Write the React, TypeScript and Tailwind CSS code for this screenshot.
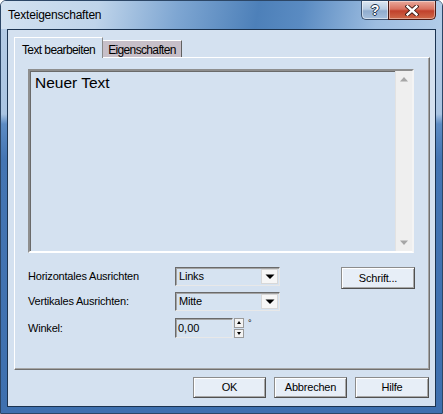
const sans = "font-['Liberation_Sans',Arial,sans-serif]";

function CaptionButtons() {
  return (
    <div className="flex h-[19px]">
      <div className="flex w-[27px] items-center justify-center rounded-bl-[5px] border border-t-0 border-r-0 border-[#3d5270] bg-[linear-gradient(180deg,#dde7f2_0%,#b9cce2_45%,#90acce_55%,#a7c0dd_100%)] shadow-[inset_0_0_0_1px_rgba(255,255,255,0.5)]">
        <span className={`${sans} text-[14px] font-bold leading-none text-white [text-shadow:1px_0_0_#22344d,-1px_0_0_#22344d,0_1px_0_#22344d,0_-1px_0_#22344d]`}>?</span>
      </div>
      <div className="flex w-[48px] items-center justify-center rounded-br-[5px] border border-t-0 border-[#4a1a14] bg-[linear-gradient(180deg,#e9a99c_0%,#d8715f_45%,#c1412c_55%,#cf6a4a_100%)] shadow-[inset_0_0_0_1px_rgba(255,255,255,0.4)]">
        <svg width="14" height="11" viewBox="0 0 14 11">
          <path d="M2.5 1.5 L11.5 9.5 M11.5 1.5 L2.5 9.5" stroke="#3a1812" strokeWidth="4.2" strokeLinecap="square" />
          <path d="M2.5 1.5 L11.5 9.5 M11.5 1.5 L2.5 9.5" stroke="#ffffff" strokeWidth="2.4" strokeLinecap="square" />
        </svg>
      </div>
    </div>
  );
}

function Combo({ value }: { value: string }) {
  return (
    <div className="flex h-[19px] w-[105px] items-center border border-[#6a6a6a] border-b-[#e8e8e8] border-r-[#e8e8e8] bg-[#d6e3f1] shadow-[inset_1px_1px_0_#a3a3a3]">
      <span className="flex-1 pl-[3px] text-[11px] leading-none tracking-[-0.2px]">{value}</span>
      <div className="mr-[1px] flex h-[15px] w-[17px] items-center justify-center border border-[#d8d8d8] bg-[#f6f6f6]">
        <svg width="10" height="6" viewBox="0 0 10 6">
          <path d="M0.5 0.5 H9.5 L5 5 Z" fill="#000" />
        </svg>
      </div>
    </div>
  );
}

function Btn({ label, w, h }: { label: string; w: string; h: string }) {
  return (
    <div
      className={`${w} ${h} flex items-center justify-center border border-[#8c8c8c] border-b-[#505050] border-r-[#505050] bg-[#e7eef7] text-[11px] leading-none tracking-[-0.2px] shadow-[inset_1px_1px_0_#ffffff,inset_-1px_-1px_0_#a8a8a8]`}
    >
      {label}
    </div>
  );
}

export default function App() {
  return (
    <div className={`${sans} flex h-[414px] w-[443px] flex-col overflow-hidden rounded-t-[6px] border border-[#2c4666] text-black`}>
      <div className="flex h-[28px] shrink-0 items-start justify-between bg-[linear-gradient(100deg,#d3e2f1_0%,#bfd4ea_22%,#7ea6d2_40%,#4d80b9_58%,#5a8bc2_68%,#9dbde0_85%,#b2cce8_100%)] pr-[6px]">
        <span className="pl-[7px] pt-[8px] text-[12px] leading-none tracking-[-0.2px]">Texteigenschaften</span>
        <CaptionButtons />
      </div>
      <div className="flex flex-1 flex-col bg-[linear-gradient(180deg,#b4cbe5_0px,#a9c4e2_85px,#5d8cc4_95px,#4475b3_130px,#3e70af_100%)] px-[6px] pb-[6px]">
        <div className="flex flex-1 flex-col border border-[#1b3350] bg-[#d4e1f0]">
          <div className="flex h-[27px] items-end pl-[6px]">
            <div className="relative z-10 mb-[-1px] flex h-[21px] w-[89px] items-start justify-center border border-b-0 border-white border-r-[#8a8a8a] bg-[#d4e1f0] pt-[6px] text-[12px] leading-none tracking-[-0.6px]">
              Text bearbeiten
            </div>
            <div className="flex h-[17px] w-[79px] items-start justify-center border border-b-0 border-white border-r-[#606060] border-l-0 bg-[#c7bfc8] pt-[3px] text-[12px] leading-none tracking-[-0.65px]">
              Eigenschaften
            </div>
          </div>
          <div className="ml-[6px] mr-[5px] flex h-[313px] flex-col border border-white border-b-[#707070] border-r-[#707070] px-[13px] pt-[11px] shadow-[inset_-1px_-1px_0_#a5a5a5]">
            <div className="flex h-[184px] w-[386px] border-2 border-[#8e8e8e] border-b-white border-r-[#f4f4f4] shadow-[inset_1px_1px_0_#6a6a6a]">
              <div className="flex-1 pl-[5px] pt-[3px] text-[15.5px] leading-[18px]">Neuer Text</div>
              <div className="flex w-[17px] flex-col items-center justify-between border-l border-[#e2e2e2] bg-[#efefef] py-[6px]">
                <svg width="8" height="5" viewBox="0 0 8 5">
                  <path d="M0 4.5 H8 L4 0 Z" fill="#a6a6a6" />
                </svg>
                <svg width="8" height="5" viewBox="0 0 8 5">
                  <path d="M0 0.5 H8 L4 5 Z" fill="#a6a6a6" />
                </svg>
              </div>
            </div>
            <div className="mt-[14px] flex flex-col text-[11px] leading-none">
              <div className="flex h-[19px] items-start">
                <span className="w-[147px] self-center tracking-[-0.2px]">Horizontales Ausrichten</span>
                <Combo value="Links" />
                <div className="ml-auto mr-[1px]">
                  <Btn label="Schrift..." w="w-[74px]" h="h-[22px]" />
                </div>
              </div>
              <div className="mt-[6px] flex h-[19px] items-center">
                <span className="w-[147px] tracking-[-0.2px]">Vertikales Ausrichten:</span>
                <Combo value="Mitte" />
              </div>
              <div className="mt-[7px] flex h-[20px] items-center">
                <span className="w-[147px] tracking-[-0.2px]">Winkel:</span>
                <div className="flex h-[20px] w-[58px] items-center border border-[#6a6a6a] border-b-[#e8e8e8] border-r-[#e8e8e8] bg-[#d6e3f1] pl-[2px] shadow-[inset_1px_1px_0_#a3a3a3]">
                  0,00
                </div>
                <div className="ml-[1px] flex h-[20px] w-[10px] flex-col gap-[1px]">
                  <div className="flex flex-1 items-center justify-center border border-[#9a9a9a] bg-[#f3f3f3]">
                    <svg width="4" height="3" viewBox="0 0 4 3">
                      <path d="M0 3 H4 L2 0 Z" fill="#000" />
                    </svg>
                  </div>
                  <div className="flex flex-1 items-center justify-center border border-[#9a9a9a] bg-[#f3f3f3]">
                    <svg width="4" height="3" viewBox="0 0 4 3">
                      <path d="M0 0 H4 L2 3 Z" fill="#000" />
                    </svg>
                  </div>
                </div>
                <span className="ml-[4px] self-start pt-[1px] text-[9px]">°</span>
              </div>
            </div>
          </div>
          <div className="mt-[7px] flex justify-end gap-[8px] pr-[6px]">
            <Btn label="OK" w="w-[73px]" h="h-[21px]" />
            <Btn label="Abbrechen" w="w-[73px]" h="h-[21px]" />
            <Btn label="Hilfe" w="w-[74px]" h="h-[21px]" />
          </div>
        </div>
      </div>
    </div>
  );
}
